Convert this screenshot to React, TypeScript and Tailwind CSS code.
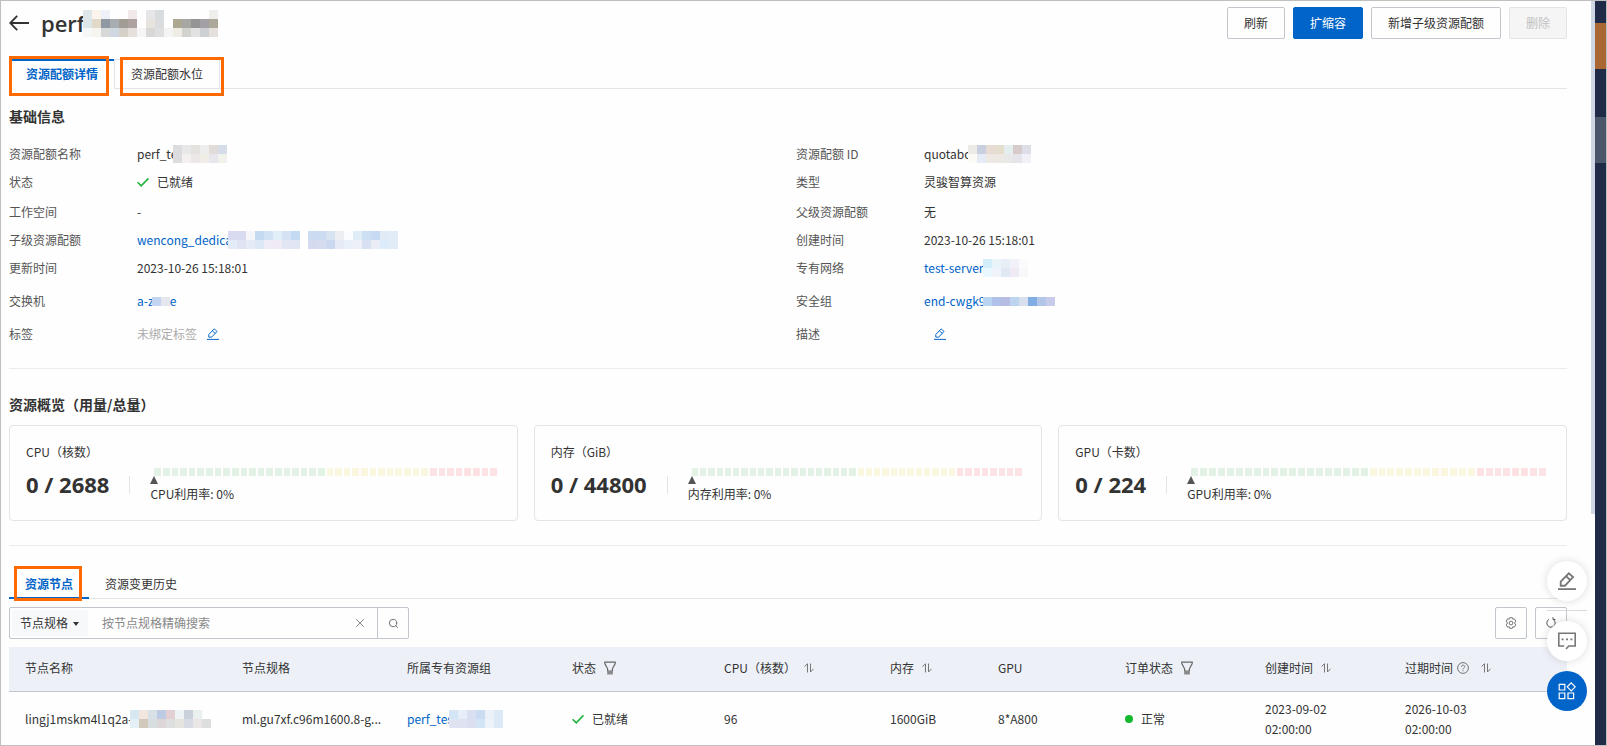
import React from 'react';
import { Search, X } from 'lucide-react';

interface EditIconProps {
  className?: string;
  strokeWidth?: number;
}

const EditIcon: React.FC<EditIconProps> = ({ className, strokeWidth = 1.3 }) => (
  <svg className={className} viewBox="0 0 16 16" fill="none" stroke="currentColor" strokeWidth={strokeWidth}>
    <path d="M0 15.2h16" />
    <path d="M2.4 12.2V8.6L9.6 1.2l3.8 3.4-7.2 7.6H2.4z" />
    <path d="M7.2 3.8l3.8 3.4" />
  </svg>
);

const ArrowBackIcon: React.FC = () => (
  <svg className="h-5 w-5" viewBox="0 0 20 20" fill="none" stroke="currentColor" strokeWidth="1.8">
    <path d="M20 10H1.2M8.2 2.8L1.2 10l7 7.2" />
  </svg>
);

const CheckIcon: React.FC = () => (
  <svg className="h-3 w-3" viewBox="0 0 12 12" fill="none" stroke="#1eb23a" strokeWidth="1.6">
    <path d="M0.6 6.2l3.6 3.6L11.5 2.4" />
  </svg>
);

const FilterIcon: React.FC = () => (
  <svg className="h-[14px] w-3" viewBox="0 0 12 14" fill="none" stroke="#666" strokeWidth="1.2">
    <path d="M0.8 1.2h10.4v1.4L8.4 7.8V10H3.6V7.8L0.8 2.6z" />
    <path d="M3.8 10.8h4.4v2H3.8z" fill="#888" stroke="#888" />
  </svg>
);

const SortIcon: React.FC = () => (
  <svg className="h-[10px] w-[10px]" viewBox="0 0 10 10" fill="none" stroke="#777" strokeWidth="1">
    <path d="M0.5 3.5L3.5 0.8V9.5M6.5 0.5v8.5l3-3.2" />
  </svg>
);

const HelpIcon: React.FC = () => (
  <svg className="h-3 w-3" viewBox="0 0 12 12" fill="none" stroke="#666">
    <circle cx="6" cy="6" r="5.4" strokeWidth="0.9" />
    <path d="M4.4 4.8c0-2.2 3.3-2.1 3.3-.2 0 1.2-1.6 1.2-1.6 2.6M6 8.2v1" strokeWidth="0.9" />
  </svg>
);

const GearIcon: React.FC = () => (
  <svg className="h-3 w-3" viewBox="0 0 12 12" fill="none" stroke="#666" strokeWidth="0.9">
    <path d="M4.7 0.7h2.6l.5 1.5 1.6-.3 1.3 2.2L9.6 6l1.1 1.9-1.3 2.2-1.6-.3-.5 1.5H4.7l-.5-1.5-1.6.3-1.3-2.2L2.4 6 1.3 4.1l1.3-2.2 1.6.3z" />
    <circle cx="6" cy="6" r="1.9" />
  </svg>
);

const RefreshIcon: React.FC = () => (
  <svg className="h-3 w-3" viewBox="0 0 12 12" fill="none" stroke="#555" strokeWidth="1">
    <path d="M8 2.3A4.2 4.2 0 1 1 4 2.3M8 0.2v2.3h2.4" />
  </svg>
);

const ChatIcon: React.FC = () => (
  <svg className="h-[18px] w-[18px]" viewBox="0 0 18 18" fill="none" stroke="#777" strokeWidth="1.6">
    <path d="M8 17l2.8-3h6.4V1.2H0.8V14h5.4" />
    <path d="M3.6 7.4h2M8 7.4h2M12.4 7.4h2" strokeWidth="1.8" />
  </svg>
);

const AppsIcon: React.FC = () => (
  <svg className="h-[18px] w-[18px]" viewBox="0 0 18 18" fill="none" stroke="#fff" strokeWidth="1.2">
    <path d="M1.2 2.4h5.6v5.6H1.2zM1.2 11h5.6v5.6H1.2zM10 11h5.6v5.6H10zM13.2 0.8l4 4-4 4-4-4z" />
  </svg>
);

interface MosaicProps {
  rows: string[];
  className?: string;
}

// Pixelated block hiding sensitive values, one colour per cell
const Mosaic: React.FC<MosaicProps> = ({ rows, className = '' }) => {
  const cells = rows.map((row) => row.split(' '));
  const width = cells[0].length * 9;
  const height = cells.length * 9;
  return (
    <svg className={`shrink-0 ${className}`} width={width} height={height} shapeRendering="crispEdges" aria-hidden="true">
      {cells.map((row, y) =>
        row.map((color, x) => (
          <rect key={`${x}-${y}`} x={x * 9} y={y * 9} width="9" height="9" fill={`#${color}`} />
        ))
      )}
    </svg>
  );
};

const linkClass = 'whitespace-nowrap text-[#0064c8]';

interface InfoItem {
  label: string;
  value: React.ReactNode;
}

const leftInfo: InfoItem[] = [
  {
    label: '资源配额名称',
    value: (
      <>
        <span>perf_te</span>
        <Mosaic className="-ml-1" rows={['dcdcde e8e8e8 e4e2de eeeeee e2dcd8 d4dde8', 'dcdde0 f4f0f0 ece8e8 efede6 e6e6ec f2f2ec']} />
      </>
    ),
  },
  {
    label: '状态',
    value: (
      <>
        <CheckIcon />
        <span className="ml-2">已就绪</span>
      </>
    ),
  },
  { label: '工作空间', value: '-' },
  {
    label: '子级资源配额',
    value: (
      <>
        <a href="#" className={linkClass}>wencong_dedica</a>
        <Mosaic className="-ml-1" rows={['d9dcf0 d9dcf0 f4f6fa c3daf0 d0e2f4 e0eef8 d4e2f4 c4daf2', 'e4ebf8 dfe3f4 e6ecf6 dde8f6 f0ecf6 f0eaf4 e2e6f4 e0e6f4']} />
        <span className="w-2" />
        <Mosaic rows={['cbdcf0 cbdcf0 d6e4f2 eceef2 fafcff e0ecf6 cddff2 c6daf4 e2eaf6 e2ecf8', 'd6daf0 d6dcf0 ccd8f0 e6eaf6 eaf0fa eef0f8 d8e0f4 eaecf6 dcecfa e2ecf8']} />
      </>
    ),
  },
  { label: '更新时间', value: '2023-10-26 15:18:01' },
  {
    label: '交换机',
    value: (
      <>
        <a href="#" className={linkClass}>a-z</a>
        <Mosaic className="-ml-[2px]" rows={['c3d5f0 e6e6ee']} />
        <a href="#" className={linkClass}>e</a>
      </>
    ),
  },
  {
    label: '标签',
    value: (
      <>
        <span className="text-[#aaa]">未绑定标签</span>
        <button type="button" aria-label="编辑标签" className="ml-[10px] text-[#0064c8]">
          <EditIcon className="h-3 w-3" />
        </button>
      </>
    ),
  },
];

const rightInfo: InfoItem[] = [
  {
    label: '资源配额 ID',
    value: (
      <>
        <span>quotabc</span>
        <Mosaic className="-ml-[2px]" rows={['ecebe6 c8cfde e6dcd4 e4decf e4eeee d6caca dedee8', 'fbfaf4 e6ecf6 eee8e4 ece8e4 e8e8e8 e4e4ea f0f0f6']} />
      </>
    ),
  },
  { label: '类型', value: '灵骏智算资源' },
  { label: '父级资源配额', value: '无' },
  { label: '创建时间', value: '2023-10-26 15:18:01' },
  {
    label: '专有网络',
    value: (
      <>
        <a href="#" className={linkClass}>test-server</a>
        <Mosaic rows={['d2eef8 e8f4f8 e8eef6 f2f0f8 fbfafc', 'eaf8fe f0f4fa e0e8f4 f0eaf4 f8f8fa']} />
      </>
    ),
  },
  {
    label: '安全组',
    value: (
      <>
        <a href="#" className={linkClass}>end-cwgk9</a>
        <Mosaic className="-ml-[2px]" rows={['b8d4f0 b0c0e8 b6bce2 bcd4ee d8dfee 80aee4 b2c6ea c8ccea']} />
      </>
    ),
  },
  {
    label: '描述',
    value: (
      <button type="button" aria-label="编辑描述" className="ml-[10px] text-[#0064c8]">
        <EditIcon className="h-3 w-3" />
      </button>
    ),
  },
];

const rowHeights = ['h-7', 'h-7', 'h-8', 'h-6', 'h-8', 'h-[34px]', 'h-8'];

const InfoList: React.FC<{ items: InfoItem[] }> = ({ items }) => (
  <dl>
    {items.map((item, index) => (
      <div key={item.label} className={`flex items-center ${rowHeights[index]}`}>
        <dt className="w-32 shrink-0 text-[#555]">{item.label}</dt>
        <dd className="flex items-center">{item.value}</dd>
      </div>
    ))}
  </dl>
);

const segmentColor = (index: number) => {
  if (index < 20) return 'bg-[#e2f3e6]';
  if (index < 32) return 'bg-[#faf6df]';
  return 'bg-[#fce2e2]';
};

interface UsageCardProps {
  title: string;
  usage: string;
  rate: string;
}

const UsageCard: React.FC<UsageCardProps> = ({ title, usage, rate }) => (
  <div className="h-24 rounded border border-[#e3e4e6] px-4 pt-[18px]">
    <div className="leading-4">{title}</div>
    <div className="flex items-start">
      <div className="mt-[10px] whitespace-nowrap font-['Open_Sans',sans-serif] text-[22px] font-bold leading-7">{usage}</div>
      <div className="ml-5 mt-4 h-[18px] w-px shrink-0 bg-[#e3e4e6]" />
      <div className="ml-5 mt-2 flex-1">
        <div className="mx-1 flex gap-[2px]">
          {Array.from({ length: 40 }, (_, index) => (
            <span key={index} className={`h-2 flex-1 ${segmentColor(index)}`} />
          ))}
        </div>
        <svg className="h-2 w-2" viewBox="0 0 8 8" fill="#555">
          <path d="M4 0l4 8H0z" />
        </svg>
        <div className="mt-[2px] leading-4">{rate}</div>
      </div>
    </div>
  </div>
);

const columns = [
  { title: '节点名称', width: 'w-[217px]' },
  { title: '节点规格', width: 'w-[165px]' },
  { title: '所属专有资源组', width: 'w-[165px]' },
  { title: '状态', width: 'w-[152px]', icon: <FilterIcon /> },
  { title: 'CPU（核数）', width: 'w-[166px]', icon: <SortIcon /> },
  { title: '内存', width: 'w-[108px]', icon: <SortIcon /> },
  { title: 'GPU', width: 'w-[127px]' },
  { title: '订单状态', width: 'w-[140px]', icon: <FilterIcon /> },
  { title: '创建时间', width: 'w-[140px]', icon: <SortIcon /> },
  { title: '过期时间', width: 'w-[178px]', help: true, icon: <SortIcon /> },
];

const App: React.FC = () => {
  return (
    <div className="relative flex h-screen overflow-hidden border border-[#bfbfbf] bg-[#fefefe] font-['Noto_Sans_CJK_SC',sans-serif] text-xs text-[#333]">
      <main className="min-w-0 flex-1 pl-2 pr-6 pt-1.5">
        <header className="flex h-8 items-center justify-between">
          <div className="flex items-center">
            <button type="button" aria-label="返回">
              <ArrowBackIcon />
            </button>
            <h1 className="ml-3 flex items-center font-['Open_Sans',sans-serif] text-[22px] font-semibold leading-8">
              <span>perf</span>
              <Mosaic
                className="-ml-[2px]"
                rows={[
                  'dde6e8 fbf4ec eef2f8 fefefe fefefe f1e8ea fefefe e6e6e8 d9dcde fefefe fefefe fefefe fefefe fefefe eeeeea',
                  'dde6e8 e2d9c8 9098a3 a8adb2 a19d95 aea2a0 fefefe e6e4dd dadcde fefefe aea892 a6a6a3 949494 a2a0a4 aca89a',
                  'f6f8f8 f6f4ee d8d8d8 cfd8e0 d6d0c8 e6e0dc f5f5f5 d9d8d6 dfdfe2 f4f4f4 efece6 d4d2cc e2e2e2 ccd0d3 e6e0dc',
                ]}
              />
            </h1>
          </div>
          <div className="flex gap-2">
            <button type="button" className="h-8 rounded-xs border border-[#c0c6cc] px-4">刷新</button>
            <button type="button" className="h-8 rounded-xs border border-[#0064c8] bg-[#0064c8] px-4 text-white">扩缩容</button>
            <button type="button" className="h-8 rounded-xs border border-[#c0c6cc] px-4">新增子级资源配额</button>
            <button type="button" disabled className="h-8 rounded-xs border border-[#e3e4e6] bg-[#f5f5f5] px-4 text-[#c1c1c1]">删除</button>
          </div>
        </header>

        {/* Page tabs */}
        <div role="tablist" className="mt-5 flex h-[30px]">
          <div className="relative border-t-2 border-[#0064c8]">
            <button type="button" role="tab" aria-selected="true" className="h-7 pb-0.5 pl-[17px] pr-4 font-bold text-[#0064c8]">资源配额详情</button>
            <div className="pointer-events-none absolute -top-[5px] left-0 h-10 w-[100px] border-3 border-[#ff6a00]" />
          </div>
          <div className="relative border border-[#e3e4e6]">
            <button type="button" role="tab" aria-selected="false" className="h-7 px-4">资源配额水位</button>
            <div className="pointer-events-none absolute -top-[3px] left-[5px] h-[39px] w-[104px] border-3 border-[#ff6a00]" />
          </div>
          <div className="flex-1 border-b border-[#e3e4e6]" />
        </div>

        <section>
          <h2 className="mt-[17px] text-sm font-bold leading-5">基础信息</h2>
          <div className="mt-[14px] grid grid-cols-2 gap-x-4">
            <InfoList items={leftInfo} />
            <InfoList items={rightInfo} />
          </div>
        </section>

        {/* Resource overview */}
        <section className="mt-[18px] border-t border-[#ececec]">
          <h2 className="mt-[25px] text-sm font-bold leading-5">资源概览（用量/总量）</h2>
          <div className="mt-[11px] grid grid-cols-3 gap-4">
            <UsageCard title="CPU（核数）" usage="0 / 2688" rate="CPU利用率: 0%" />
            <UsageCard title="内存（GiB）" usage="0 / 44800" rate="内存利用率: 0%" />
            <UsageCard title="GPU（卡数）" usage="0 / 224" rate="GPU利用率: 0%" />
          </div>
        </section>

        {/* Nodes */}
        <section className="mt-6 border-t border-[#ececec]">
          <div role="tablist" className="mt-[25px] flex h-7">
            <div className="relative">
              <button type="button" role="tab" aria-selected="true" className="h-7 border-b-2 border-[#0064c8] px-4 font-bold text-[#0064c8]">资源节点</button>
              <div className="pointer-events-none absolute -top-[5px] left-[5px] h-[35px] w-[68px] border-3 border-[#ff6a00]" />
            </div>
            <button type="button" role="tab" aria-selected="false" className="border-b border-[#e3e4e6] px-4 pb-px">资源变更历史</button>
            <div className="flex-1 border-b border-[#e3e4e6]" />
          </div>

          <div className="mt-2 flex items-center justify-between">
            <div className="flex h-8 w-[400px] items-center rounded-xs border border-[#c0c6cc]">
              <div className="relative ml-[2px] flex items-center bg-[#f7f8fa]">
                <select aria-label="搜索条件" className="h-[26px] w-[76px] appearance-none pl-2 outline-none">
                  <option>节点规格</option>
                </select>
                <svg className="pointer-events-none absolute right-[9px] mt-[2px] h-1 w-[6px]" viewBox="0 0 6 4" fill="#333">
                  <path d="M0 0h6L3 4z" />
                </svg>
              </div>
              <input
                type="text"
                aria-label="按节点规格精确搜索"
                placeholder="按节点规格精确搜索"
                className="ml-[14px] min-w-0 flex-1 outline-none placeholder:text-[#888]"
              />
              <button type="button" aria-label="清空" className="mr-[10px] text-[#888]">
                <X size={14} strokeWidth={1.7} />
              </button>
              <button type="button" aria-label="搜索" className="flex h-full w-[31px] items-center justify-center border-l border-[#c0c6cc] text-[#666]">
                <Search size={11} strokeWidth={2} />
              </button>
            </div>
            <div className="flex gap-2">
              <button type="button" aria-label="设置" className="flex h-8 w-8 items-center justify-center rounded-xs border border-[#c0c6cc]">
                <GearIcon />
              </button>
              <button type="button" aria-label="刷新列表" className="flex h-8 w-8 items-center justify-center rounded-xs border border-[#c0c6cc]">
                <RefreshIcon />
              </button>
            </div>
          </div>

          <table className="mt-2 w-full table-fixed text-left">
            <thead>
              <tr className="h-11 border-b border-[#c0c6cc] bg-[#edf1f7]">
                {columns.map((column) => (
                  <th key={column.title} className={`px-4 pb-0.5 font-normal ${column.width}`}>
                    <div className="flex items-center whitespace-nowrap">
                      {column.title}
                      {column.help && <span className="ml-1"><HelpIcon /></span>}
                      {column.icon && <span className={column.help ? 'ml-3' : 'ml-2'}>{column.icon}</span>}
                    </div>
                  </th>
                ))}
              </tr>
            </thead>
            <tbody>
              <tr className="h-14 leading-5">
                <td className="pl-4">
                  <div className="flex items-center">
                    <span>lingj1mskm4l1q2a-</span>
                    <Mosaic className="-ml-[2px]" rows={['d8e8f2 f2e6de d8dfe6 bccae4 e4d0d2 eef4f6 c8d0da eaf0ee fefefe', 'e4eff6 d2c8ba d8dde0 dcd6d8 dcdee0 e6e4de d8dce2 ebe6e6 dedede']} />
                  </div>
                </td>
                <td className="px-4 whitespace-nowrap">ml.gu7xf.c96m1600.8-g...</td>
                <td className="px-4">
                  <div className="flex items-center">
                    <a href="#" className={linkClass}>perf_tes</a>
                    <Mosaic className="-ml-1" rows={['d4e6f6 e8eef8 d8e0f2 cadcf2 ecf0f8 dceaf8', 'dfe3f2 dfe2f0 dcdff0 d2e4f6 eef2fa dceaf8']} />
                  </div>
                </td>
                <td className="px-4">
                  <div className="flex items-center gap-2"><CheckIcon />已就绪</div>
                </td>
                <td className="px-4">96</td>
                <td className="px-4">1600GiB</td>
                <td className="px-4">8*A800</td>
                <td className="px-4">
                  <div className="flex items-center gap-2">
                    <span className="h-2 w-2 rounded-full bg-[#14b82c]" />
                    正常
                  </div>
                </td>
                <td className="px-4">2023-09-02<br />02:00:00</td>
                <td className="px-4">2026-10-03<br />02:00:00</td>
              </tr>
            </tbody>
          </table>
        </section>
      </main>

      {/* Scrollbar thumb and page edge */}
      <div className="w-1 shrink-0">
        <div className="h-[513px] bg-[#d0d7e4]" />
      </div>
      <div className="w-[11px] shrink-0 bg-[#1f2b47] pt-[22px]">
        <div className="h-[46px] bg-[#a96733]" />
        <div className="mt-12 h-[46px] bg-[#4c566b]" />
      </div>

      {/* Floating actions */}
      <div className="absolute bottom-[34px] right-[19px] flex flex-col items-center">
        <button type="button" aria-label="反馈" className="flex h-10 w-10 items-center justify-center rounded-full bg-white text-[#777] shadow-[0_0_8px_rgba(0,0,0,0.14)]">
          <EditIcon className="h-[18px] w-[18px]" strokeWidth={1.6} />
        </button>
        <div className="mb-[10px] mt-[9px] h-px w-10 bg-[#d8dade]" />
        <button type="button" aria-label="咨询" className="flex h-10 w-10 items-center justify-center rounded-full bg-white shadow-[0_0_8px_rgba(0,0,0,0.14)]">
          <ChatIcon />
        </button>
        <button type="button" aria-label="应用" className="mt-[10px] flex h-10 w-10 items-center justify-center rounded-full bg-[#0064c8]">
          <AppsIcon />
        </button>
      </div>
    </div>
  );
};

export default App;
